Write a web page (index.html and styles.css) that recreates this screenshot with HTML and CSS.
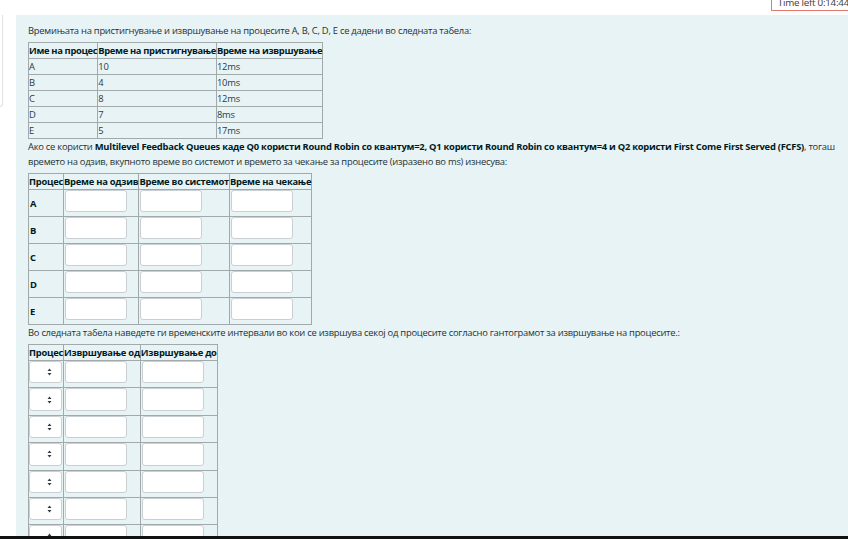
FILE: index.html
```html
<!DOCTYPE html>
<html lang="mk">
<head>
<meta charset="utf-8">
<title>Quiz</title>
<link rel="stylesheet" href="styles.css">
</head>
<body>
<div class="topbar">
  <div class="timer">Time left 0:14:44</div>
</div>
<div class="layout">
  <div class="side"><div class="sidebox"></div></div>
  <div class="panel">
    <p class="qtext">Времињата на пристигнување и извршување на процесите A, B, C, D, E се дадени во следната табела:</p>
    <table class="grid data">
      <tr><th>Име на процес</th><th>Време на пристигнување</th><th>Време на извршување</th></tr>
      <tr><td>A</td><td>10</td><td>12ms</td></tr>
      <tr><td>B</td><td>4</td><td>10ms</td></tr>
      <tr><td>C</td><td>8</td><td>12ms</td></tr>
      <tr><td>D</td><td>7</td><td>8ms</td></tr>
      <tr><td>E</td><td>5</td><td>17ms</td></tr>
    </table>
    <p class="qtext">Ако се користи <b>Multilevel Feedback Queues каде Q0 користи Round Robin со квантум=2, Q1 користи Round Robin со квантум=4 и Q2 користи First Come First Served (FCFS)</b>, тогаш времето на одзив, вкупното време во системот и времето за чекање за процесите (изразено во ms) изнесува:</p>
    <table class="grid answers">
      <tr><th>Процес</th><th>Време на одзив</th><th>Време во системот</th><th>Време на чекање</th></tr>
      <tr><th class="lbl">A</th><td><input type="text"></td><td><input type="text"></td><td><input type="text"></td></tr>
      <tr><th class="lbl">B</th><td><input type="text"></td><td><input type="text"></td><td><input type="text"></td></tr>
      <tr><th class="lbl">C</th><td><input type="text"></td><td><input type="text"></td><td><input type="text"></td></tr>
      <tr><th class="lbl">D</th><td><input type="text"></td><td><input type="text"></td><td><input type="text"></td></tr>
      <tr><th class="lbl">E</th><td><input type="text"></td><td><input type="text"></td><td><input type="text"></td></tr>
    </table>
    <p class="qtext">Во следната табела наведете ги временските интервали во кои се извршува секој од процесите согласно гантограмот за извршување на процесите.:</p>
    <table class="grid answers intervals">
      <tr><th>Процес</th><th>Извршување од</th><th>Извршување до</th></tr>
      <tr><td><div class="select"><svg width="5" height="8" viewBox="0 0 5 8"><path d="M2.5 0.5 L4.5 3 L0.5 3 Z M2.5 7.5 L4.5 5 L0.5 5 Z" fill="#343a40"/></svg></div></td><td><input type="text"></td><td><input type="text"></td></tr>
      <tr><td><div class="select"><svg width="5" height="8" viewBox="0 0 5 8"><path d="M2.5 0.5 L4.5 3 L0.5 3 Z M2.5 7.5 L4.5 5 L0.5 5 Z" fill="#343a40"/></svg></div></td><td><input type="text"></td><td><input type="text"></td></tr>
      <tr><td><div class="select"><svg width="5" height="8" viewBox="0 0 5 8"><path d="M2.5 0.5 L4.5 3 L0.5 3 Z M2.5 7.5 L4.5 5 L0.5 5 Z" fill="#343a40"/></svg></div></td><td><input type="text"></td><td><input type="text"></td></tr>
      <tr><td><div class="select"><svg width="5" height="8" viewBox="0 0 5 8"><path d="M2.5 0.5 L4.5 3 L0.5 3 Z M2.5 7.5 L4.5 5 L0.5 5 Z" fill="#343a40"/></svg></div></td><td><input type="text"></td><td><input type="text"></td></tr>
      <tr><td><div class="select"><svg width="5" height="8" viewBox="0 0 5 8"><path d="M2.5 0.5 L4.5 3 L0.5 3 Z M2.5 7.5 L4.5 5 L0.5 5 Z" fill="#343a40"/></svg></div></td><td><input type="text"></td><td><input type="text"></td></tr>
      <tr><td><div class="select"><svg width="5" height="8" viewBox="0 0 5 8"><path d="M2.5 0.5 L4.5 3 L0.5 3 Z M2.5 7.5 L4.5 5 L0.5 5 Z" fill="#343a40"/></svg></div></td><td><input type="text"></td><td><input type="text"></td></tr>
      <tr><td><div class="select"><svg width="5" height="8" viewBox="0 0 5 8"><path d="M2.5 0.5 L4.5 3 L0.5 3 Z M2.5 7.5 L4.5 5 L0.5 5 Z" fill="#343a40"/></svg></div></td><td><input type="text"></td><td><input type="text"></td></tr>
    </table>
  </div>
</div>
<div class="bottombar"></div>
</body>
</html>
```
FILE: styles.css
```css
html, body {
  margin: 0;
  padding: 0;
  height: 100%;
  overflow: hidden;
  background: #ffffff;
  font-family: "Open Sans", "Noto Sans", sans-serif;
  font-size: 9.4px;
  letter-spacing: -0.25px;
  line-height: 15px;
  color: #001a1e;
}

.topbar {
  height: 15px;
  display: flex;
  justify-content: flex-end;
}

.timer {
  margin-top: -6px;
  margin-right: -8px;
  height: 17px;
  box-sizing: border-box;
  border: 1px solid #e3776d;
  padding: 0 6px;
  line-height: 15px;
  font-size: 9.8px;
  color: #3a3a3a;
  white-space: nowrap;
  background: #fff;
}

.layout {
  display: flex;
  align-items: flex-start;
  min-height: 600px;
}

.side {
  width: 16px;
  flex: none;
}

.sidebox {
  width: 2px;
  height: 91px;
  border-right: 1px solid #dfe3e6;
  border-bottom: 1px solid #dfe3e6;
  border-bottom-right-radius: 3px;
}

.panel {
  flex: 1;
  align-self: stretch;
  background: #e7f3f5;
  padding: 8px 4px 0 12px;
  min-height: 600px;
}

.qtext {
  margin: 0 0 4px 0;
  color: #1f3236;
}

.qtext b {
  color: #001a1e;
}

.grid {
  border-collapse: collapse;
  margin: 0;
}

.grid th,
.grid td {
  border: 1px solid #a2a9ab;
  padding: 0;
  text-align: left;
  vertical-align: middle;
  white-space: nowrap;
  font-weight: normal;
}

.grid th {
  font-weight: bold;
  letter-spacing: -0.33px;
  color: #001a1e;
}

.answers th {
  letter-spacing: -0.25px;
}

.data td {
  color: #2b3b3e;
}

.answers th.lbl {
  font-weight: bold;
  padding-left: 1px;
}

.answers input {
  display: block;
  box-sizing: border-box;
  width: 62px;
  height: 22px;
  margin: 0 0 4px 1px;
  padding: 0 4px;
  border: 1px solid #c9cfd3;
  border-radius: 3px;
  background: #ffffff;
  font: inherit;
}

.intervals input {
  height: 22.4px;
}

.select {
  box-sizing: border-box;
  width: 33px;
  height: 22.4px;
  margin: 0 0 4px 0;
  border: 1px solid #c9cfd3;
  border-radius: 3px;
  background: #ffffff;
  display: flex;
  align-items: center;
  justify-content: flex-end;
  padding-right: 9px;
}

.bottombar {
  position: fixed;
  left: 0;
  right: 0;
  bottom: 0;
  height: 3px;
  background: #111111;
}
```
